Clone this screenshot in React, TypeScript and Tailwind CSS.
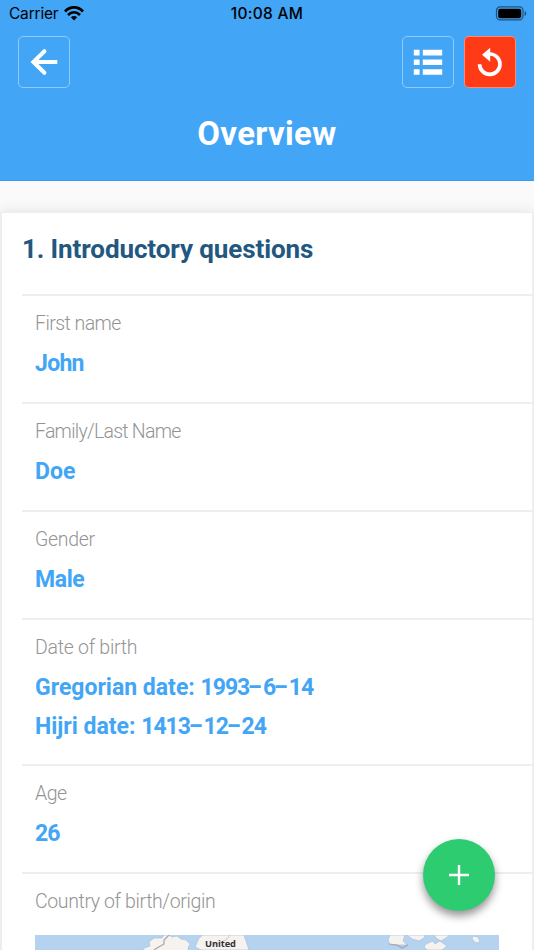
import type { ReactNode } from "react";
import clsx from "clsx";

type Entry = {
    label: string;
    values: string[];
    labelSpacing: string;
    valueSpacing?: string;
};

const entries: Entry[] = [
    { label: "First name", labelSpacing: "tracking-[-0.55px]", values: ["John"], valueSpacing: "tracking-[-0.7px]" },
    { label: "Family/Last Name", labelSpacing: "tracking-[-0.75px]", values: ["Doe"] },
    { label: "Gender", labelSpacing: "tracking-[-0.3px]", values: ["Male"], valueSpacing: "tracking-[-0.4px]" },
    {
        label: "Date of birth",
        labelSpacing: "tracking-[-0.27px]",
        values: ["Gregorian date: 1993-6-14", "Hijri date: 1413-12-24"],
    },
    { label: "Age", labelSpacing: "tracking-[-0.5px]", values: ["26"] },
];

const StatusBar = () => (
    <div className="flex h-7 items-center justify-between pl-[9px] pr-[7px] font-['Inter',sans-serif] text-black">
        <div className="flex w-[120px] items-center gap-[6px]">
            <span className="text-[15.5px] tracking-[-0.2px]">Carrier</span>
            <svg className="-mt-[2px]" width="20" height="15" viewBox="0 0 20 15">
                <path d="M1 5.5C6 .1 14 .1 19 5.5M4 9c3.6-3.5 8.4-3.5 12 0" fill="none" stroke="currentColor" strokeWidth="2.7" />
                <path d="M10 14.4l-3.1-3.1c1.8-1.6 4.4-1.6 6.2 0z" fill="currentColor" />
            </svg>
        </div>
        <span className="-ml-[2px] text-[15.5px] font-medium tracking-[0.3px]">10:08 AM</span>
        <div className="-mt-[2px] flex w-[120px] justify-end">
            <svg width="32" height="15" viewBox="0 0 32 15">
                <rect x="1.5" y="0.9" width="26.5" height="13" rx="3.6" fill="none" stroke="#000" strokeOpacity=".5" strokeWidth="1.2" />
                <rect x="3.2" y="2.7" width="23" height="9.5" rx="2" fill="#000" />
                <path d="M29.6 5v5c2.2-.7 2.2-4.3 0-5z" fill="#000" fillOpacity=".5" />
            </svg>
        </div>
    </div>
);

const HeaderButton = ({ children, danger }: { children: ReactNode; danger?: boolean }) => (
    <button
        className={clsx(
            "flex size-[52px] items-center justify-center rounded-[5px] border border-white/40 bg-clip-border text-white",
            danger && "bg-[#ff3a17]"
        )}
    >
        {children}
    </button>
);

const BackIcon = () => (
    <svg width="50" height="50" viewBox="0 0 50 50" fill="none" stroke="currentColor" strokeWidth="4">
        <path d="M38.3 25H15" />
        <path d="M25.4 14.2L14.4 25l11 10.8" strokeLinecap="round" />
    </svg>
);

const ListIcon = () => (
    <svg width="50" height="50" viewBox="0 0 50 50" fill="currentColor">
        <path d="M10.8 12.8h5.8v5.6h-5.8zM19.8 12.8h19.4v5.6H19.8zM10.8 22.5h5.8v5.6h-5.8zM19.8 22.5h19.4v5.6H19.8zM10.8 32.2h5.8v5.6h-5.8zM19.8 32.2h19.4v5.6H19.8z" />
    </svg>
);

const ReplayIcon = () => (
    <svg width="50" height="50" viewBox="0 0 50 50" fill="none">
        <path d="M14.6 27.2a10.2 10.2 0 1 0 10.2-10.2" stroke="currentColor" strokeWidth="3.7" />
        <path d="M25.2 10.8v14l-8.2-7z" fill="currentColor" />
    </svg>
);

// Digits sit tighter than letters, hyphens are stretched to digit width
const Value = ({ text, spacing }: { text: string; spacing?: string }) => (
    <p className={clsx("-mt-px mb-px h-[39px] whitespace-pre text-[23px] font-bold leading-[39px] text-[#42a5f5]", spacing)}>
        {text.split(/(-|\d+)/).map((part, i) => {
            if (part === "-") {
                return <span key={i} className="inline-block w-[13.6px] -translate-x-[0.5px] -translate-y-px scale-x-[1.75] text-center">-</span>;
            }
            return /\d/.test(part) ? <span key={i} className="tracking-[-1px]">{part}</span> : part;
        })}
    </p>
);

const Row = ({ label, spacing, className, children }: { label: string; spacing: string; className?: string; children: ReactNode }) => (
    <div className={clsx("border-t-2 border-[#eeeeee] pl-[13px] pt-[13px]", className)}>
        <p className={clsx("mb-[6px] h-[30px] whitespace-nowrap text-[19.5px] font-light leading-[30px] text-[#949494]", spacing)}>{label}</p>
        {children}
    </div>
);

const CountryMap = () => (
    <svg className="block" width="464" height="80" viewBox="0 0 464 80">
        <rect width="464" height="80" fill="#b5d2ee" />
        <g fill="#f6f3ee" stroke="#9fbbe0" strokeWidth=".6">
            <path d="M129 0l-2 3-8 0-5 4 1 4-6 2-1 4h46l-1-4 2-4-4-4-5-1-4-3-5 1-3-2z" />
            <path d="M168 0l-4 3-4 9 6 3h48l-5-15z" />
            <path d="M355 0l-2 5 2 5h17l-4-4 2-6z" />
            <path d="M372 0l5 4 7 2 5-3 1-3zM391 9l7-3 2 3 5-3 7 5-5 4h-15l-3-3zM399 0l2 3 5 3 5-3 4-3z" />
            <path d="M438 1l5 1 2 5-4 1-4-4z" />
        </g>
        <path d="M134 0l-5 5v4l-7 4-3 2M354 9l8 1 5 3 6-3" fill="none" stroke="#a9a0b2" strokeWidth="1.2" />
        <path d="M195 0l-4 5-13 5" fill="none" stroke="#ccc3c8" />
        <text x="170" y="12.3" fontFamily="Open Sans, sans-serif" fontSize="9.3" fontWeight="700" fill="#333" textLength="31">United</text>
    </svg>
);

export default function App() {
    return (
        <div className="relative h-[950px] w-[534px] overflow-hidden bg-[#fafafa] font-['Roboto',sans-serif]">
            <header className="h-[181px] border-b border-[#3b9aee] bg-[#42a5f5]">
                <StatusBar />
                <div className="mt-2 flex pl-[18px] pr-[18px]">
                    <HeaderButton>
                        <BackIcon />
                    </HeaderButton>
                    <div className="ml-auto flex gap-[10px]">
                        <HeaderButton>
                            <ListIcon />
                        </HeaderButton>
                        <HeaderButton danger>
                            <ReplayIcon />
                        </HeaderButton>
                    </div>
                </div>
                <h1 className="mt-[26px] text-center text-[33px] font-bold leading-10 tracking-[0.3px] text-white">Overview</h1>
            </header>

            <main className="mt-[31px] h-[760px] border-x-2 border-t border-[#eeeeee] bg-white pl-5 shadow-[0_0_14px_rgba(0,0,0,0.1)]">
                <h2 className="flex h-[81px] items-start pt-[16px] text-[26px] font-bold leading-10 tracking-[-0.1px] text-[#22577f]">1. Introductory questions</h2>
                {entries.map((entry) => (
                    <Row
                        key={entry.label}
                        label={entry.label}
                        spacing={entry.labelSpacing}
                        className={entry.values.length > 1 ? "pb-[17px]" : "pb-[18px]"}
                    >
                        {entry.values.map((value) => (
                            <Value key={value} text={value} spacing={entry.valueSpacing} />
                        ))}
                    </Row>
                ))}
                <Row label="Country of birth/origin" spacing="tracking-[-0.38px]">
                    <div className="mt-[18px]">
                        <CountryMap />
                    </div>
                </Row>
            </main>

            <button className="absolute left-[423px] top-[839px] flex size-[72px] items-center justify-center rounded-full bg-[#2ecc71] text-white shadow-[0_5px_8px_rgba(0,0,0,0.42)]">
                <svg width="20" height="20" viewBox="0 0 20 20" fill="none" stroke="currentColor" strokeWidth="2.4">
                    <path d="M10 0v20M0 10h20" />
                </svg>
            </button>
        </div>
    );
}
